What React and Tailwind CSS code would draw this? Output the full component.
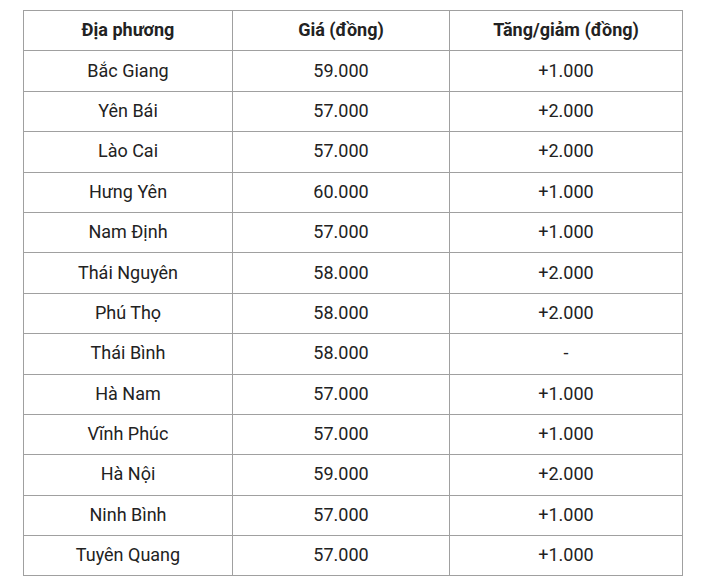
import React from 'react'

const rows = [
  ['Bắc Giang', '59.000', '+1.000'],
  ['Yên Bái', '57.000', '+2.000'],
  ['Lào Cai', '57.000', '+2.000'],
  ['Hưng Yên', '60.000', '+1.000'],
  ['Nam Định', '57.000', '+1.000'],
  ['Thái Nguyên', '58.000', '+2.000'],
  ['Phú Thọ', '58.000', '+2.000'],
  ['Thái Bình', '58.000', '-'],
  ['Hà Nam', '57.000', '+1.000'],
  ['Vĩnh Phúc', '57.000', '+1.000'],
  ['Hà Nội', '59.000', '+2.000'],
  ['Ninh Bình', '57.000', '+1.000'],
  ['Tuyên Quang', '57.000', '+1.000'],
]

export default function App() {
  return (
    <div className="bg-white w-[706px] h-[584px] pt-[10px] pl-[23px] font-['Roboto',sans-serif] text-[#222]">
      <table className="border-collapse text-[18px] text-center table-fixed w-[659px]">
        <thead>
          <tr className="h-[40.4px]">
            <th className="w-[209px] border border-[#a0a0a0] font-bold pb-[2px]">Địa phương</th>
            <th className="w-[217px] border border-[#a0a0a0] font-bold pb-[2px]">Giá (đồng)</th>
            <th className="w-[233px] border border-[#a0a0a0] font-bold pb-[2px]">Tăng/giảm (đồng)</th>
          </tr>
        </thead>
        <tbody>
          {rows.map((r) => (
            <tr key={r[0]} className="h-[40.4px]">
              <td className="border border-[#a0a0a0] pb-[2px]">{r[0]}</td>
              <td className="border border-[#a0a0a0] pb-[2px]">{r[1]}</td>
              <td className="border border-[#a0a0a0] pb-[2px]">{r[2]}</td>
            </tr>
          ))}
        </tbody>
      </table>
    </div>
  )
}
